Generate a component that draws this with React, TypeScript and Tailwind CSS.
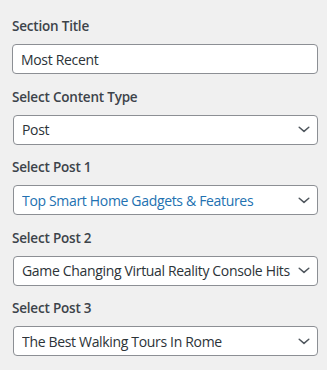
const posts = [
  { label: "Select Post 1", value: "Top Smart Home Gadgets & Features", active: true },
  { label: "Select Post 2", value: "Game Changing Virtual Reality Console Hits" },
  { label: "Select Post 3", value: "The Best Walking Tours In Rome" },
];

function Label({ children }: { children: React.ReactNode }) {
  return <div className="h-[17px] text-[13.5px] font-semibold leading-[17px] tracking-[-0.2px] text-[#3c434a] mb-[9px]">{children}</div>;
}

function Chevron() {
  return (
    <svg width="12" height="7" viewBox="0 0 12 7" className="ml-1 shrink-0 text-[#50575e]">
      <polyline points="1.2,1.2 6,5.4 10.8,1.2" fill="none" stroke="currentColor" strokeWidth="1.5" strokeLinecap="round" strokeLinejoin="round" />
    </svg>
  );
}

function SelectBox({ value, active }: { value: string; active?: boolean }) {
  return (
    <div className="ml-px flex h-[30px] items-center rounded-[4px] border border-[#8c8f94] bg-white pl-[8px] pr-[7px]">
      <span className={`flex-1 whitespace-nowrap overflow-hidden text-[14px] tracking-[-0.33px] ${active ? "text-[#2271b1]" : "text-[#2c3338]"}`}>{value}</span>
      <Chevron />
    </div>
  );
}

export default function App() {
  return (
    <div className="h-[370px] w-[327px] bg-[#f0f0f0] pl-[12px] pt-[18px] pr-[9px]" style={{ fontFamily: '"Open Sans", "Noto Sans", sans-serif' }}>
      <Label>Section Title</Label>
      <div className="flex h-[30px] items-center rounded-[4px] border border-[#8c8f94] bg-white pl-[8px] text-[14px] tracking-[-0.33px] text-[#2c3338]">
        Most Recent
      </div>

      <div className="mt-[14.5px]">
        <Label>Select Content Type</Label>
        <SelectBox value="Post" />
      </div>

      {posts.map((p) => (
        <div key={p.label} className="mt-[14.5px]">
          <Label>{p.label}</Label>
          <SelectBox value={p.value} active={p.active} />
        </div>
      ))}
    </div>
  );
}
